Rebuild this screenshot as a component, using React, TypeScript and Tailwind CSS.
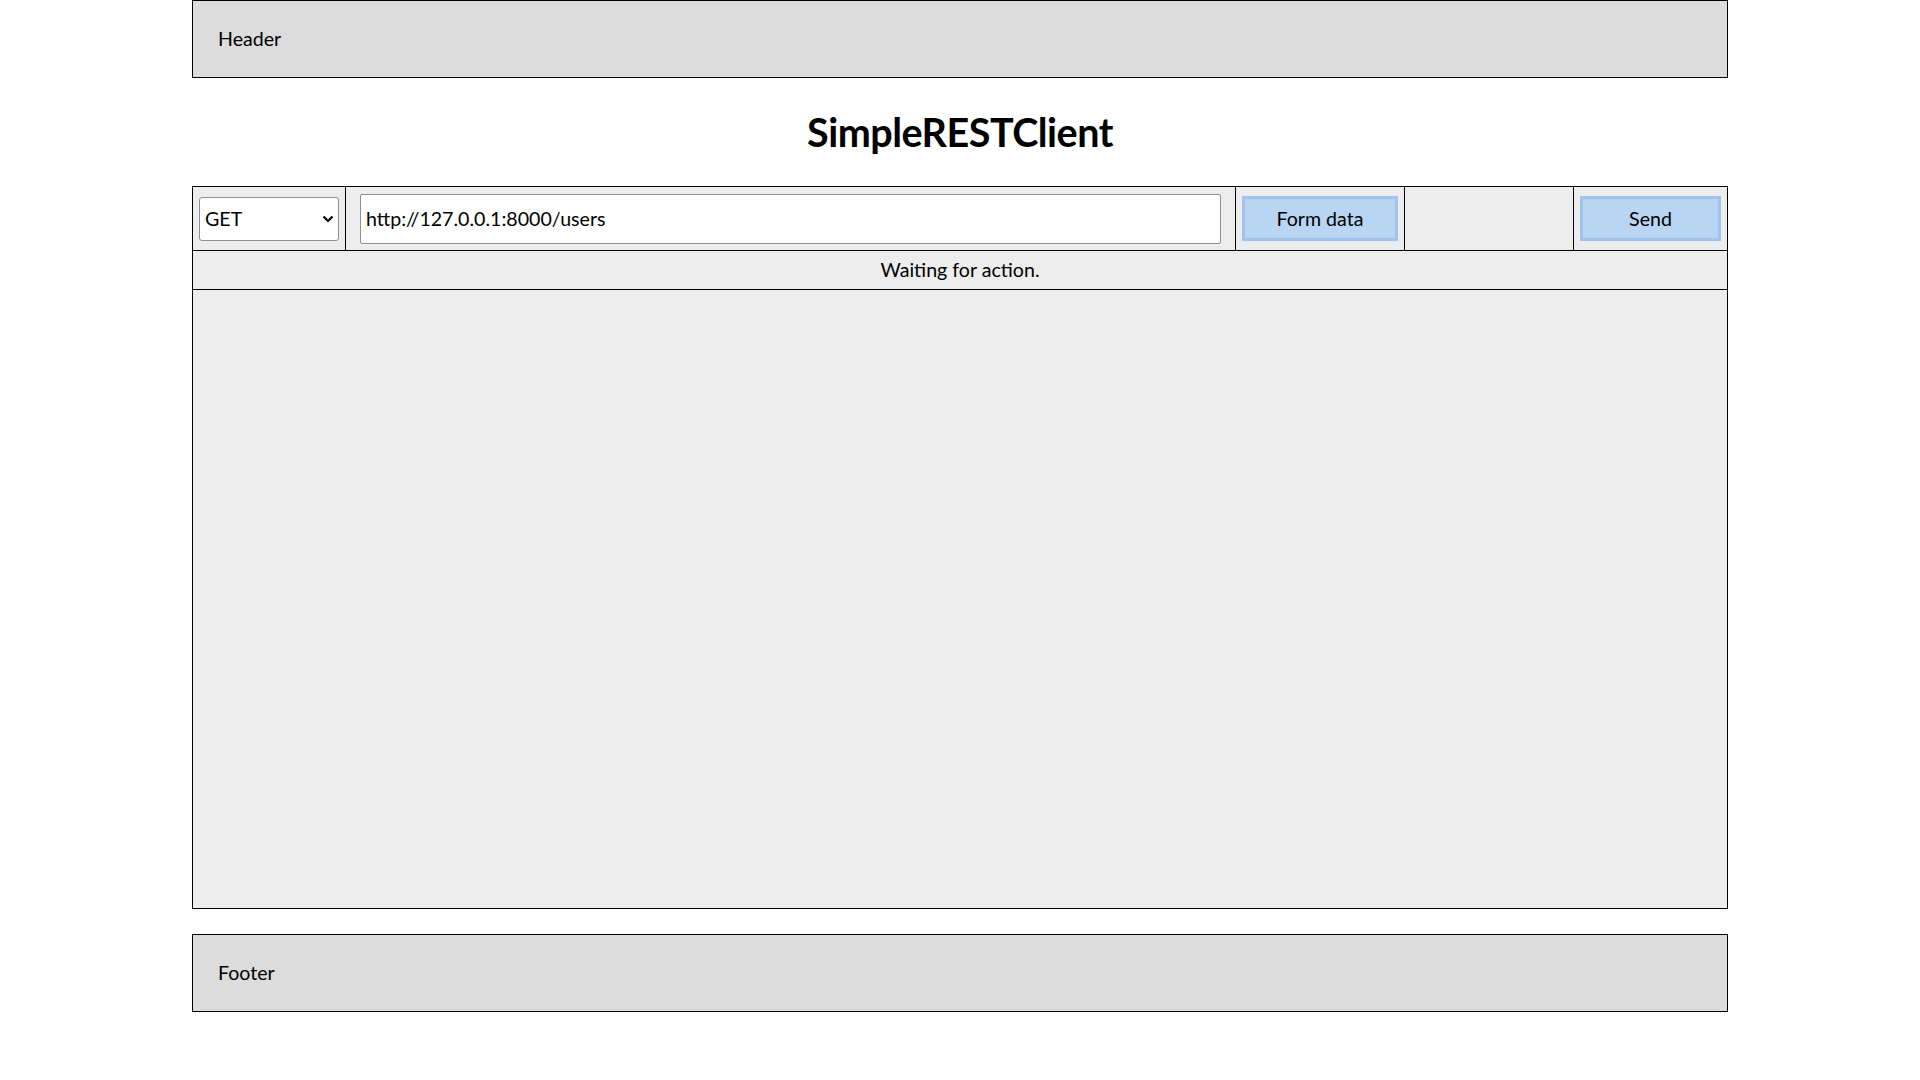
import { useState } from "react";

export default function App() {
  const [method, setMethod] = useState("GET");
  const [url, setUrl] = useState("http://127.0.0.1:8000/users");
  const [status] = useState("Waiting for action.");

  return (
    <div className="min-h-screen bg-white text-black font-['Lato','Liberation_Sans',sans-serif] text-[19.6px]">
      {/* Header */}
      <div className="mx-auto w-[1536px] h-[78px] border border-black bg-[#dcdcdc] flex items-center pl-[25px]">
        Header
      </div>

      {/* Title */}
      <div className="h-[108px] flex items-center justify-center">
        <h1 className="text-[39.5px] font-bold tracking-[-0.5px]">SimpleRESTClient</h1>
      </div>

      {/* Client panel */}
      <div className="mx-auto w-[1536px] h-[723px] border border-black bg-[#ededed] flex flex-col">
        <div className="grid grid-cols-[153px_890px_169px_169px_153px] h-[64px] border-b border-black">
          <div className="border-r border-black flex items-center px-[6px]">
            <div className="relative w-full">
              <select
                value={method}
                onChange={(e) => setMethod(e.target.value)}
                className="appearance-none w-full h-[44px] bg-white border border-[#8f8f8f] rounded-[3px] pl-[5px] text-[19.6px] outline-none"
              >
                <option>GET</option>
                <option>POST</option>
                <option>PUT</option>
                <option>DELETE</option>
              </select>
              <svg
                className="absolute right-[5px] top-1/2 -translate-y-1/2 w-[12px] h-[8px] pointer-events-none"
                viewBox="0 0 12 8"
              >
                <path d="M1.5 1.5 L6 6 L10.5 1.5" fill="none" stroke="black" strokeWidth="2.2" />
              </svg>
            </div>
          </div>
          <div className="border-r border-black flex items-center px-[14px]">
            <input
              value={url}
              onChange={(e) => setUrl(e.target.value)}
              className="w-full h-[50px] bg-white border border-[#8f8f8f] rounded-[2px] px-[5px] text-[19.6px] outline-none"
            />
          </div>
          <div className="border-r border-black flex items-center px-[6px]">
            <button className="w-full h-[45px] bg-[#b8d5f3] border-[3px] border-[#9fc5ee] text-[19.6px]">
              Form data
            </button>
          </div>
          <div className="border-r border-black" />
          <div className="flex items-center px-[6px]">
            <button className="w-full h-[45px] bg-[#b8d5f3] border-[3px] border-[#9fc5ee] text-[19.6px]">
              Send
            </button>
          </div>
        </div>
        <div className="h-[39px] border-b border-black flex items-center justify-center">
          {status}
        </div>
        <div className="flex-1" />
      </div>

      {/* Footer */}
      <div className="mx-auto mt-[25px] w-[1536px] h-[78px] border border-black bg-[#dcdcdc] flex items-center pl-[25px]">
        Footer
      </div>
    </div>
  );
}
